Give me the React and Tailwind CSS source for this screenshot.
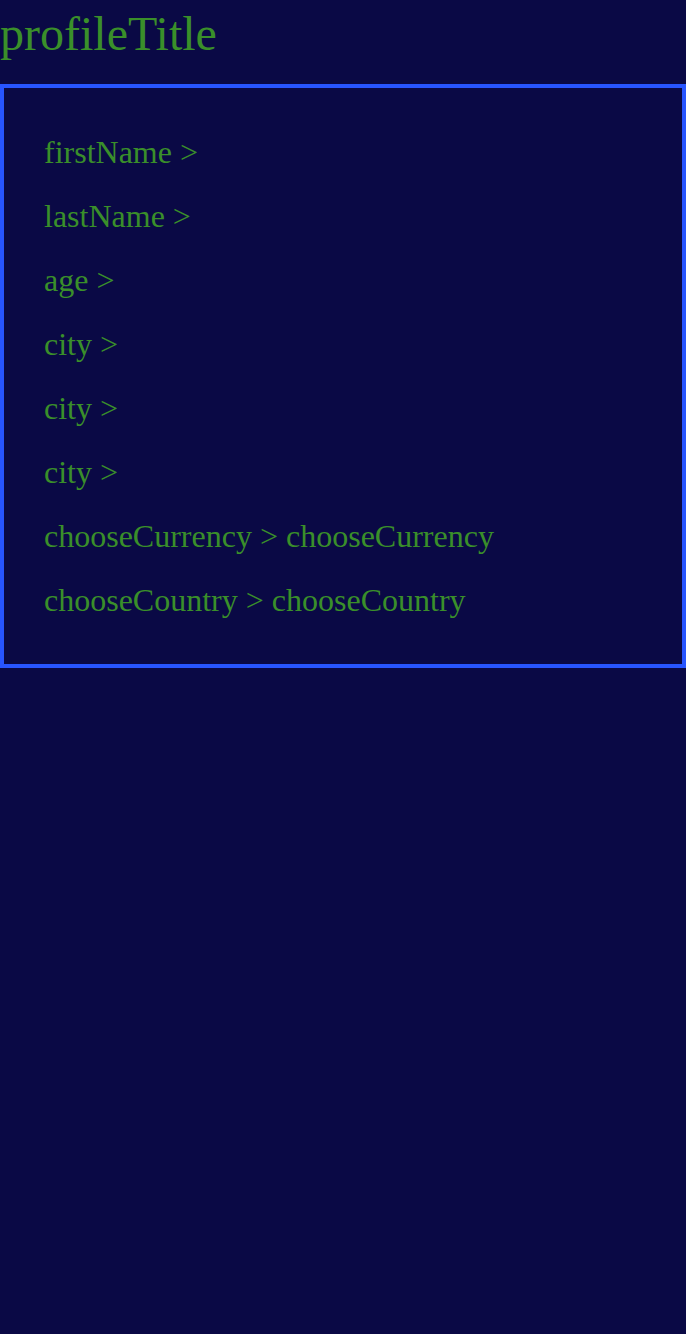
const ROWS = [
  'firstName >',
  'lastName >',
  'age >',
  'city >',
  'city >',
  'city >',
  'chooseCurrency > chooseCurrency',
  'chooseCountry > chooseCountry',
]

export default function App() {
  return (
    <div className="min-h-[1334px] bg-[#0a0945] text-[#3a8f2a] font-['Liberation_Serif','Times_New_Roman',serif]">
      <h1 className="text-[48px] leading-[68px] mb-4">profileTitle</h1>
      <div className="border-4 border-[#2855ff] px-10 py-8">
        {ROWS.map((row, i) => (
          <p key={i} className="text-[32px] leading-[64px]">
            {row}
          </p>
        ))}
      </div>
    </div>
  )
}
